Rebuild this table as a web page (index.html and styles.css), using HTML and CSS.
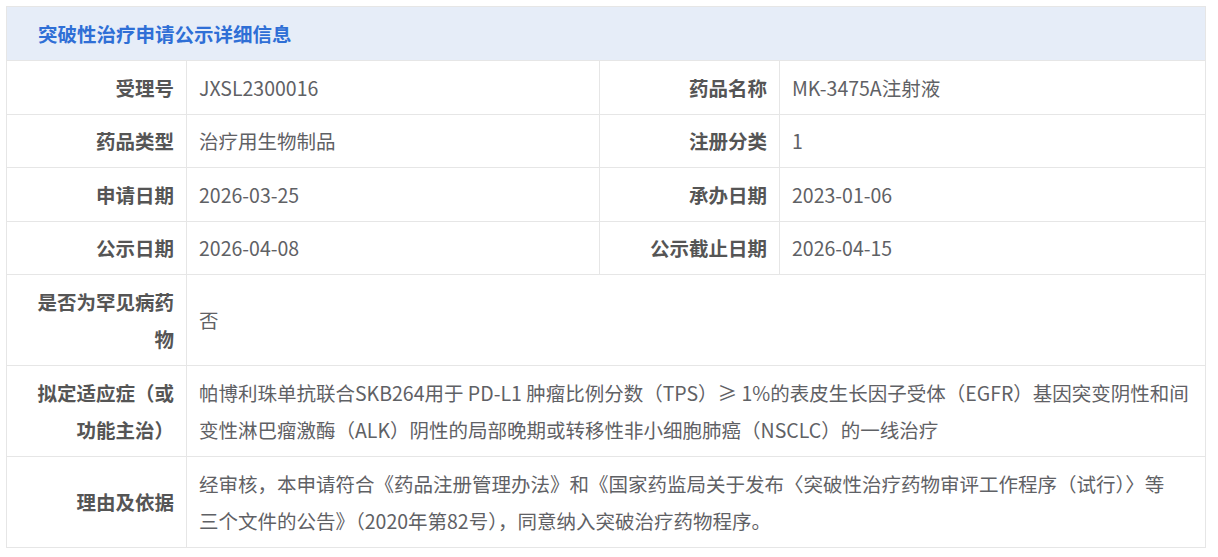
FILE: index.html
```html
<!DOCTYPE html>
<html lang="zh-CN">
<head>
<meta charset="utf-8">
<title>突破性治疗申请公示详细信息</title>
<link rel="stylesheet" href="styles.css">
</head>
<body>
<div class="panel">
  <div class="panel-head">突破性治疗申请公示详细信息</div>
  <div class="grid">
    <div class="label">受理号</div>
    <div class="value">JXSL2300016</div>
    <div class="label">药品名称</div>
    <div class="value">MK-3475A注射液</div>

    <div class="label">药品类型</div>
    <div class="value">治疗用生物制品</div>
    <div class="label">注册分类</div>
    <div class="value">1</div>

    <div class="label">申请日期</div>
    <div class="value">2026-03-25</div>
    <div class="label">承办日期</div>
    <div class="value">2023-01-06</div>

    <div class="label">公示日期</div>
    <div class="value">2026-04-08</div>
    <div class="label">公示截止日期</div>
    <div class="value">2026-04-15</div>

    <div class="label">是否为罕见病药物</div>
    <div class="value wide">否</div>

    <div class="label">拟定适应症（或功能主治）</div>
    <div class="value wide">帕博利珠单抗联合SKB264用于 PD-L1 肿瘤比例分数（TPS）≥ 1%的表皮生长因子受体（EGFR）基因突变阴性和间变性淋巴瘤激酶（ALK）阴性的局部晚期或转移性非小细胞肺癌（NSCLC）的一线治疗</div>

    <div class="label">理由及依据</div>
    <div class="value wide"><p class="para">经审核，本申请符合《药品注册管理办法》和《国家药监局关于发布〈突破性治疗药物审评工作程序（试行）〉等<br>三个文件的公告》（2020年第82号），同意纳入突破治疗药物程序。</p></div>
  </div>
</div>
</body>
</html>
```

FILE: styles.css
```css
* { box-sizing: border-box; }

body {
  margin: 0;
  padding: 6px;
  background: #ffffff;
  font-family: "Noto Sans CJK SC", "Noto Sans", sans-serif;
}

.panel {
  width: 1200px;
  border-top: 1px solid #e6e6e6;
  border-left: 1px solid #e6e6e6;
}

.panel-head {
  height: 54px;
  padding-left: 31px;
  display: flex;
  align-items: center;
  background: #e6edf8;
  color: #2f6fd6;
  font-size: 19.5px;
  font-weight: 700;
  border-right: 1px solid #e6e6e6;
  border-bottom: 1px solid #e6e6e6;
}

.grid {
  display: grid;
  grid-template-columns: 180px 413px 180px 426px;
}

.label,
.value {
  display: flex;
  align-items: center;
  padding: 7.5px 12px;
  line-height: 37.5px;
  font-size: 19.5px;
  border-right: 1px solid #e6e6e6;
  border-bottom: 1px solid #e6e6e6;
}

.label {
  justify-content: flex-end;
  text-align: right;
  padding-right: 12px;
  padding-left: 30px;
  font-weight: 700;
  color: #555555;
}

.value {
  color: #5f6165;
}

.value.wide {
  grid-column: span 3;
  padding-right: 14px;
}

.para {
  margin: 0;
}
```
